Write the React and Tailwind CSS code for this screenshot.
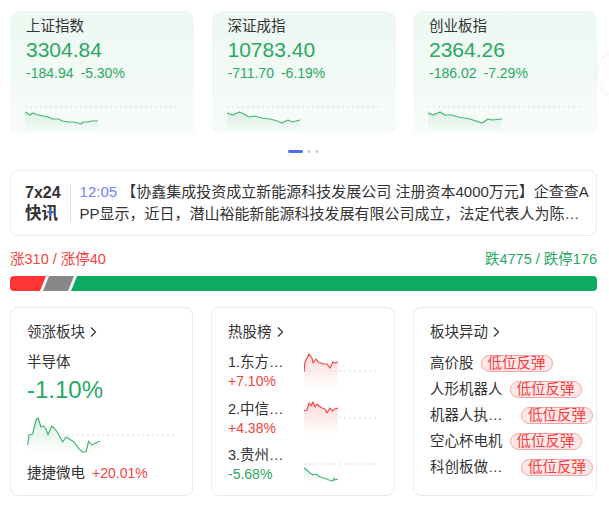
import React from 'react';

const GREEN = '#2aa862';
const RED = '#f33f3f';

const indices = [
  {
    name: '上证指数',
    value: '3304.84',
    chg: '-184.94',
    pct: '-5.30%',
    pts: [[0,13],[5,16],[8,14],[13,16],[18,17],[23,18],[28,20],[33,20],[38,22],[43,23],[48,23],[53,24],[56,25],[58,23],[62,23],[67,22],[73,22]],
  },
  {
    name: '深证成指',
    value: '10783.40',
    chg: '-711.70',
    pct: '-6.19%',
    pts: [[0,14],[6,16],[12,13],[17,15],[22,18],[27,17],[35,19],[43,20],[50,22],[55,24],[61,21],[65,23],[73,21]],
  },
  {
    name: '创业板指',
    value: '2364.26',
    chg: '-186.02',
    pct: '-7.29%',
    pts: [[0,14],[5,16],[12,13],[17,16],[24,16],[30,18],[42,20],[48,22],[54,24],[60,20],[64,21],[74,20]],
  },
];

const hotStocks = [
  {
    name: '1.东方财富',
    pct: '+7.10%',
    up: true,
    pts: [[0,19],[1,9],[3,5],[5,1],[8,5],[9,10],[12,6],[14,9],[17,10],[19,11],[23,11],[26,15],[29,9],[31,10],[34,9]],
  },
  {
    name: '2.中信证券',
    pct: '+4.38%',
    up: true,
    pts: [[0,11],[3,10],[5,3],[7,6],[9,2],[11,7],[13,4],[15,6],[18,8],[21,9],[23,13],[26,8],[28,11],[31,9],[34,8]],
  },
  {
    name: '3.贵州茅台',
    pct: '-5.68%',
    up: false,
    pts: [[0,22],[3,24],[6,27],[9,29],[12,28],[16,31],[20,32],[25,34],[29,35],[30,32],[31,34],[34,33]],
  },
];

const moves = ['高价股', '人形机器人', '机器人执行器', '空心杯电机', '科创板做市股'];

const leadPts = [[0.7,30],[2,20],[5.7,19],[9,5],[11,3],[14,12],[16.7,11],[19,14],[21,20],[24.7,11],[27,13],[31,18],[35.7,27],[39,22],[44,25],[47,27],[52,34],[55.7,37],[59,37],[61.7,26],[64.7,30],[73,26]];

// small intraday line with dotted base line and faded fill
const Spark = ({ id, w, h, mid, pts, color, fill }) => {
  const line = pts.map(([x, y]) => `${x},${y}`).join(' ');
  const last = pts[pts.length - 1];
  const area = `${pts[0][0]},${h} ${line} ${last[0]},${h}`;
  return (
    <svg width={w} height={h} viewBox={`0 0 ${w} ${h}`} className="block shrink-0">
      <defs>
        <linearGradient id={id} x1="0" y1="0" x2="0" y2="1">
          <stop offset="0%" stopColor={fill} stopOpacity="0.9" />
          <stop offset="100%" stopColor={fill} stopOpacity="0" />
        </linearGradient>
      </defs>
      <line x1="0" y1={mid} x2={w} y2={mid} stroke="#d9d9d9" strokeWidth="1" strokeDasharray="2 3" />
      <polygon points={area} fill={`url(#${id})`} />
      <polyline points={line} fill="none" stroke={color} strokeWidth="1.2" strokeLinejoin="round" />
    </svg>
  );
};

const Chevron = () => (
  <svg width="8" height="12" viewBox="0 0 8 12" className="ml-[4px]">
    <polyline points="2,1.5 6.5,6 2,10.5" fill="none" stroke="#333" strokeWidth="1.2" />
  </svg>
);

export default function App() {
  return (
    <div className="relative w-[609px] h-[506px] overflow-hidden bg-white pl-[10px] pr-[12px] pt-[11px] font-['Liberation_Sans','Noto_Sans_CJK_SC',sans-serif] text-[#333]">
      {/* index cards */}
      <div className="flex gap-[17.5px]">
        {indices.map((idx, i) => (
          <div
            key={idx.name}
            className="w-[184px] h-[122px] rounded-t-[10px] bg-gradient-to-b from-[#edf8f2] to-[#f7fcf9] pl-[16px] pt-[5px]"
          >
            <div className="text-[14.5px] leading-[20px]">{idx.name}</div>
            <div className="mt-[2px] text-[21px] leading-[24px]" style={{ color: GREEN }}>{idx.value}</div>
            <div className="mt-[2px] flex gap-[7px] text-[14px] leading-[18px]" style={{ color: GREEN }}>
              <span>{idx.chg}</span>
              <span>{idx.pct}</span>
            </div>
            <div className="mt-[17px] -ml-[1px]">
              <Spark id={`top${i}`} w={153} h={34} mid={8} pts={idx.pts} color="#46b472" fill="#d7efe1" />
            </div>
          </div>
        ))}
      </div>

      {/* scroll button, mostly outside the window */}
      <div className="absolute left-[598px] top-[52px] w-[44px] h-[44px] rounded-full bg-white shadow-[0_0_6px_rgba(0,0,0,0.08)]" />

      {/* pager */}
      <div className="mt-[17px] flex justify-center gap-[4px]">
        <div className="w-[15px] h-[3px] rounded-full bg-[#4e6ef2]" />
        <div className="w-[4px] h-[3px] rounded-full bg-[#d8d8d8]" />
        <div className="w-[4px] h-[3px] rounded-full bg-[#d8d8d8]" />
      </div>

      {/* 7x24 flash news */}
      <div className="mt-[17px] h-[66px] rounded-[8px] border border-[#ebebeb] flex items-center pl-[14px]">
        <div className="flex flex-col items-start font-bold">
          <span className="text-[16px] leading-[20px]">7x24</span>
          <span className="relative text-[16.5px] leading-[20px]">
            快讯
            <svg width="5" height="9" viewBox="0 0 5 9" className="absolute left-[23px] top-[5px]">
              <polyline points="3.5,0.5 1,4.5 4,4.5 1.5,8.5" fill="none" stroke="#3a7cf2" strokeWidth="1.3" />
            </svg>
          </span>
        </div>
        <div className="ml-[9px] w-px h-[38px] bg-[#dedede]" />
        <p className="ml-[9px] w-[510px] text-[15px] leading-[22px] break-all line-clamp-2">
          <span className="text-[#7381f2]">12:05 </span>
          【协鑫集成投资成立新能源科技发展公司 注册资本4000万元】企查查APP显示，近日，潜山裕能新能源科技发展有限公司成立，法定代表人为陈…
        </p>
      </div>

      {/* advance / decline */}
      <div className="mt-[13px] flex items-center justify-between text-[14.5px] leading-[20px]">
        <span style={{ color: RED }}>涨310 / 涨停40</span>
        <span style={{ color: GREEN }}>跌4775 / 跌停176</span>
      </div>
      <div className="mt-[7px] flex h-[15px]">
        <div className="w-[36px] h-full rounded-l-[4px] bg-[#ff3535] [clip-path:polygon(0_0,100%_0,calc(100%_-_6px)_100%,0_100%)]" />
        <div className="-ml-[3px] w-[31px] h-full bg-[#888888] [clip-path:polygon(6px_0,100%_0,calc(100%_-_6px)_100%,0_100%)]" />
        <div className="-ml-[3px] flex-1 h-full rounded-r-[4px] bg-[#0bab62] [clip-path:polygon(6px_0,100%_0,100%_100%,0_100%)]" />
      </div>

      {/* bottom cards */}
      <div className="mt-[16px] flex gap-[18px]">
        {/* leading sector */}
        <div className="w-[183px] h-[189px] rounded-[8px] border border-[#ebebeb] pl-[16px] pt-[14px]">
          <div className="flex items-center text-[14.5px] leading-[20px]">
            领涨板块<Chevron />
          </div>
          <div className="mt-[10px] text-[14.5px] leading-[20px]">半导体</div>
          <div className="mt-[4px] text-[24px] leading-[28px]" style={{ color: GREEN }}>-1.10%</div>
          <div className="mt-[11px]">
            <Spark id="lead" w={150} h={40} mid={20} pts={leadPts} color="#46b472" fill="#d7efe1" />
          </div>
          <div className="mt-[8px] flex items-center text-[14.5px] leading-[20px]">
            <span>捷捷微电</span>
            <span className="ml-[7px] text-[14px]" style={{ color: RED }}>+20.01%</span>
          </div>
        </div>

        {/* hot stocks */}
        <div className="w-[184px] h-[189px] rounded-[8px] border border-[#ebebeb] pl-[16px] pt-[14px]">
          <div className="flex items-center text-[14.5px] leading-[20px]">
            热股榜<Chevron />
          </div>
          <div className="mt-[10px] flex flex-col gap-[7.5px]">
            {hotStocks.map((s, i) => (
              <div key={s.name} className="flex items-start h-[39px]">
                <div className="w-[66px] shrink-0">
                  <div className="truncate text-[14.5px] leading-[20px]">{s.name}</div>
                  <div className="text-[14px] leading-[19px]" style={{ color: s.up ? RED : GREEN }}>{s.pct}</div>
                </div>
                <div className="ml-[10px] mt-[1px]">
                  <Spark
                    id={`hot${i}`}
                    w={74}
                    h={36}
                    mid={18}
                    pts={s.pts}
                    color={s.up ? '#f04646' : '#46b472'}
                    fill={s.up ? '#fcd6d6' : '#d7efe1'}
                  />
                </div>
              </div>
            ))}
          </div>
        </div>

        {/* sector moves */}
        <div className="w-[184px] h-[189px] rounded-[8px] border border-[#ebebeb] pl-[16px] pt-[14px]">
          <div className="flex items-center text-[14.5px] leading-[20px]">
            板块异动<Chevron />
          </div>
          <div className="mt-[11px] flex flex-col gap-[6px]">
            {moves.map((m) => (
              <div key={m} className="flex items-center h-[20px]">
                <span className="max-w-[84px] truncate text-[14.5px] leading-[20px]">{m}</span>
                <span className="ml-[7px] h-[17px] px-[6px] rounded-full border border-[#f7a2a2] bg-[#ffe8e8] text-[14.5px] leading-[15px]" style={{ color: RED }}>
                  低位反弹
                </span>
              </div>
            ))}
          </div>
        </div>
      </div>
    </div>
  );
}
